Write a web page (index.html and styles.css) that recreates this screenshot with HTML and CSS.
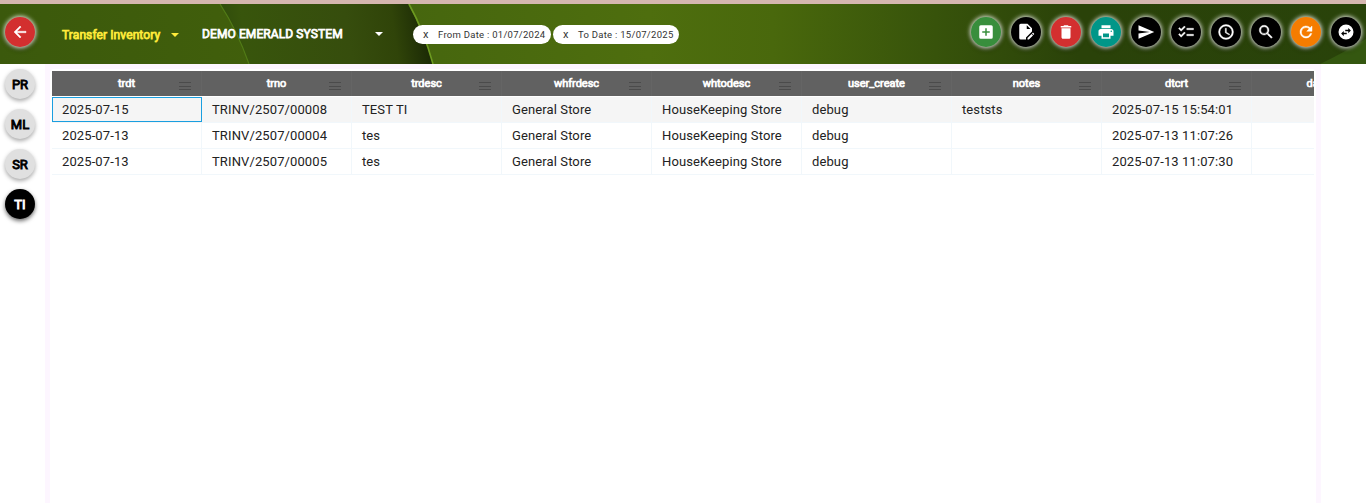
FILE: index.html
```
<!DOCTYPE html>
<html lang="en">
<head>
<meta charset="utf-8">
<title>Transfer Inventory</title>
<link rel="stylesheet" href="styles.css">
</head>
<body>
<header class="header">
  <svg class="backdrop" viewBox="0 0 1366 60" preserveAspectRatio="none" aria-hidden="true">
    <defs>
      <linearGradient id="base" x1="0" x2="1"><stop offset="0" stop-color="#3b590c"/><stop offset="1" stop-color="#415f0c"/></linearGradient>
      <linearGradient id="mid" gradientUnits="userSpaceOnUse" x1="220" y1="10" x2="425" y2="-20"><stop offset="0" stop-color="#304c0c"/><stop offset=".1" stop-color="#38550c"/><stop offset=".6" stop-color="#364d0d"/><stop offset=".82" stop-color="#304409"/><stop offset="1" stop-color="#182605"/></linearGradient>
      <linearGradient id="right" gradientUnits="userSpaceOnUse" x1="410" y1="0" x2="1366" y2="0"><stop offset="0" stop-color="#46660e"/><stop offset=".25" stop-color="#4e6e0e"/><stop offset=".38" stop-color="#49680c"/><stop offset=".55" stop-color="#37530b"/><stop offset=".7" stop-color="#2a4209"/><stop offset="1" stop-color="#29430a"/></linearGradient>
    </defs>
    <path fill="url(#base)" d="M0 0h260v60H0z"/>
    <path fill="url(#mid)" d="M220 0Q237 26 249 60H440L409 0z"/>
    <path fill="none" stroke="#517b16" stroke-width="1.2" d="M220 0Q237 26 249 60"/>
    <path fill="url(#right)" d="M408 0H1366V60H433Q423 27 408 0z"/>
    <path fill="none" stroke="#6d9a20" stroke-width="1.600" d="M409 0Q424 27 433 60"/>
    <path fill="#345710" d="M1320 60Q1345 48 1366 35V60z"/>
  </svg>
  <button class="round red back" aria-label="Back"><svg viewBox="0 0 24 24"><path stroke="#fff" stroke-width=".6" d="M20 11H7.83l5.59-5.59L12 4l-8 8 8 8 1.41-1.41L7.83 13H20z"/></svg></button>
  <div class="select menu"><span>Transfer Inventory</span><i class="caret"></i></div>
  <div class="select company"><span>DEMO EMERALD SYSTEM</span><i class="caret"></i></div>
  <div class="chips">
    <div class="chip from"><b>x</b><span>From Date : 01/07/2024</span></div>
    <div class="chip to"><b>x</b><span>To Date : 15/07/2025</span></div>
  </div>
  <nav class="actions">
    <button class="round green" aria-label="Add"><svg viewBox="0 0 24 24"><path d="M19 3H5a2 2 0 0 0-2 2v14a2 2 0 0 0 2 2h14a2 2 0 0 0 2-2V5a2 2 0 0 0-2-2zm-2 10h-4v4h-2v-4H7v-2h4V7h2v4h4z"/></svg></button>
    <button class="round" aria-label="Edit"><svg viewBox="0 0 24 24"><path d="M12 19.2V22H5a2 2 0 0 1-2-2V3a2 2 0 0 1 2-2h9l6 6v4.2zM13 3v5h5zm1 17.1V22h1.900l5.400-5.400-1.900-1.900zm8.800-5.100-.9.9-1.900-1.900.9-.9c.2-.2.6-.2.8 0l1.100 1.100c.2.2.2.6 0 .8z"/></svg></button>
    <button class="round red" aria-label="Delete"><svg viewBox="0 0 24 24"><path d="M6 19c0 1.100.9 2 2 2h8c1.100 0 2-.9 2-2V7H6zM19 4h-3.500l-1-1h-5l-1 1H5v2h14z"/></svg></button>
    <button class="round teal" aria-label="Print"><svg viewBox="0 0 24 24"><path d="M19 8H5c-1.660 0-3 1.340-3 3v6h4v4h12v-4h4v-6c0-1.660-1.340-3-3-3zm-3 11H8v-5h8zm3-7a1 1 0 1 1 0-2 1 1 0 0 1 0 2zM18 3H6v4h12z"/></svg></button>
    <button class="round" aria-label="Send"><svg viewBox="0 0 24 24"><path d="M2 21 23 12 2 3v7l15 2-15 2z"/></svg></button>
    <button class="round" aria-label="Checklist"><svg viewBox="0 0 24 24"><path stroke="#fff" stroke-width=".5" d="M22 7h-9v2h9zm0 8h-9v2h9zM5.540 11 2 7.460l1.410-1.410 2.120 2.120 4.240-4.240 1.410 1.410zm0 8L2 15.460l1.410-1.410 2.120 2.120 4.240-4.240 1.410 1.410z"/></svg></button>
    <button class="round" aria-label="History"><svg viewBox="0 0 24 24"><path stroke="#fff" stroke-width=".5" fill-rule="evenodd" d="M12 2a10 10 0 1 0 0 20 10 10 0 0 0 0-20zm0 2a8 8 0 1 1 0 16 8 8 0 0 1 0-16z"/><path stroke="#fff" stroke-width=".5" d="M12.500 7H11v6l5.250 3.150.75-1.230-4.500-2.670z"/></svg></button>
    <button class="round" aria-label="Search"><svg viewBox="0 0 24 24"><path stroke="#fff" stroke-width=".5" d="M15.500 14h-.79l-.28-.27A6.470 6.470 0 0 0 16 9.500 6.500 6.500 0 1 0 9.500 16c1.610 0 3.090-.59 4.230-1.570l.27.28v.79l5 4.990L20.490 19zm-6 0a4.500 4.500 0 1 1 0-9 4.500 4.500 0 0 1 0 9z"/></svg></button>
    <button class="round orange" aria-label="Refresh"><svg viewBox="0 0 24 24"><path stroke="#fff" stroke-width=".6" d="M17.650 6.350A8 8 0 1 0 19.730 14h-2.080A6 6 0 1 1 12 6c1.660 0 3.140.69 4.220 1.780L13 11h7V4z"/></svg></button>
    <button class="round" aria-label="Switch"><svg viewBox="0 0 24 24"><path d="M22 12a10 10 0 1 0-20 0 10 10 0 0 0 20 0zm-7-5.500 3.500 3.500-3.500 3.500V11h-4V9h4zm-6 11L5.500 14 9 10.500V13h4v2H9z"/></svg></button>
  </nav>
</header>
<main class="body">
  <aside class="side">
    <button class="tab">PR</button><button class="tab">ML</button><button class="tab">SR</button><button class="tab active">TI</button>
  </aside>
  <section class="frame">
    <div class="panel">
      <div class="grid head">
        <div>trdt<i></i></div><div>trno<i></i></div><div>trdesc<i></i></div><div>whfrdesc<i></i></div><div>whtodesc<i></i></div><div>user_create<i></i></div><div>notes<i></i></div><div>dtcrt<i></i></div><div>date_crt<i></i></div>
      </div>
      <div class="grid row selected"><div class="focus">2025-07-15</div><div>TRINV/2507/00008</div><div>TEST TI</div><div>General Store</div><div>HouseKeeping Store</div><div>debug</div><div>teststs</div><div>2025-07-15 15:54:01</div><div></div></div>
      <div class="grid row"><div>2025-07-13</div><div>TRINV/2507/00004</div><div>tes</div><div>General Store</div><div>HouseKeeping Store</div><div>debug</div><div></div><div>2025-07-13 11:07:26</div><div></div></div>
      <div class="grid row"><div>2025-07-13</div><div>TRINV/2507/00005</div><div>tes</div><div>General Store</div><div>HouseKeeping Store</div><div>debug</div><div></div><div>2025-07-13 11:07:30</div><div></div></div>
    </div>
  </section>
</main>
</body>
</html>
```
FILE: styles.css
```
* { box-sizing: border-box; }
body { margin: 0; height: 503px; overflow: hidden; display: flex; flex-direction: column; background: #fff; font-family: Roboto, sans-serif; }
button { border: 0; padding: 0; font-family: inherit; }
.header { position: relative; isolation: isolate; flex: none; height: 64px; padding-left: 5px; border-top: 4px solid #d5b7b0; display: flex; align-items: flex-start; }
.backdrop { position: absolute; inset: 0; width: 100%; height: 100%; z-index: -1; }
.round { width: 30px; height: 30px; flex: none; border-radius: 50%; background: #000; display: flex; align-items: center; justify-content: center; box-shadow: 0 0 4px 1px rgba(255, 255, 255, .85), 0 3px 5px rgba(0, 0, 0, .4); }
.round svg { width: 18px; height: 18px; fill: #fff; }
.red { background: #d32f2f; }
.green { background: #388e3c; }
.teal { background: #009688; }
.orange { background: #f57c00; }
.back { margin-top: 13px; }
.select { display: flex; align-items: center; justify-content: space-between; height: 60px; color: #fff; font-size: 12px; letter-spacing: .1px; white-space: nowrap; -webkit-text-stroke: .75px currentColor; }
.menu { width: 117px; height: 61px; margin-left: 27px; color: #ffeb3b; }
.company { width: 181px; margin-left: 23px; }
.caret { border: 4.500px solid transparent; border-top-color: currentColor; border-bottom: 0; }
.chips { display: flex; gap: 2px; margin: 21px 0 0 30px; }
.chip { height: 19px; border-radius: 10px; background: #fff; color: #333; display: flex; align-items: center; padding-left: 10px; font-size: 9.500px; letter-spacing: .27px; white-space: nowrap; }
.chip b { width: 15px; font-size: 11px; font-weight: 400; }
.from { width: 138px; }
.to { width: 126px; }
.actions { display: flex; gap: 10px; margin: 13px 5px 0 auto; }
.body { flex: 1; display: flex; min-height: 0; }
.side { width: 45px; padding: 5px 0 0 5px; display: flex; flex-direction: column; gap: 10px; }
.tab { width: 30px; height: 30px; border-radius: 50%; background: #e0e0e0; color: #000; font-size: 13px; -webkit-text-stroke: .9px currentColor; box-shadow: 0 2px 4px rgba(0, 0, 0, .35); }
.active { background: #000; color: #fff; box-shadow: 0 2px 4px rgba(0, 0, 0, .6); }
.frame { width: 1276px; padding: 5px 5px 0; background: #fdf6ff; }
.panel { height: 100%; padding: 2px 2px 0; border-radius: 4px 4px 0 0; background: #fff; overflow: hidden; }
.grid { display: grid; grid-template-columns: repeat(9, 150px); width: 1262px; overflow: hidden; }
.head { height: 26px; background: #616161; border-bottom: 1px solid #fff; color: #fff; font-size: 11px; line-height: 25px; text-align: center; -webkit-text-stroke: .7px currentColor; }
.head div { position: relative; border-right: 1px solid #656565; }
.head i { position: absolute; right: 10px; top: 11px; width: 12px; height: 8px; border: solid #4b4b4b; border-width: 1px 0; background: linear-gradient(#4b4b4b, #4b4b4b) 0 50% / 100% 1px no-repeat; }
.row { height: 26px; font-size: 13px; line-height: 25px; letter-spacing: .11px; color: #222; }
.row div { padding-left: 10px; border-right: 1px solid #f1f7fb; border-bottom: 1px solid #f1f7fb; white-space: nowrap; }
.selected { background: #f5f5f5; }
.row .focus { border: 1px solid #1a9fe0; padding-left: 9px; line-height: 23px; height: 25px; }
```
